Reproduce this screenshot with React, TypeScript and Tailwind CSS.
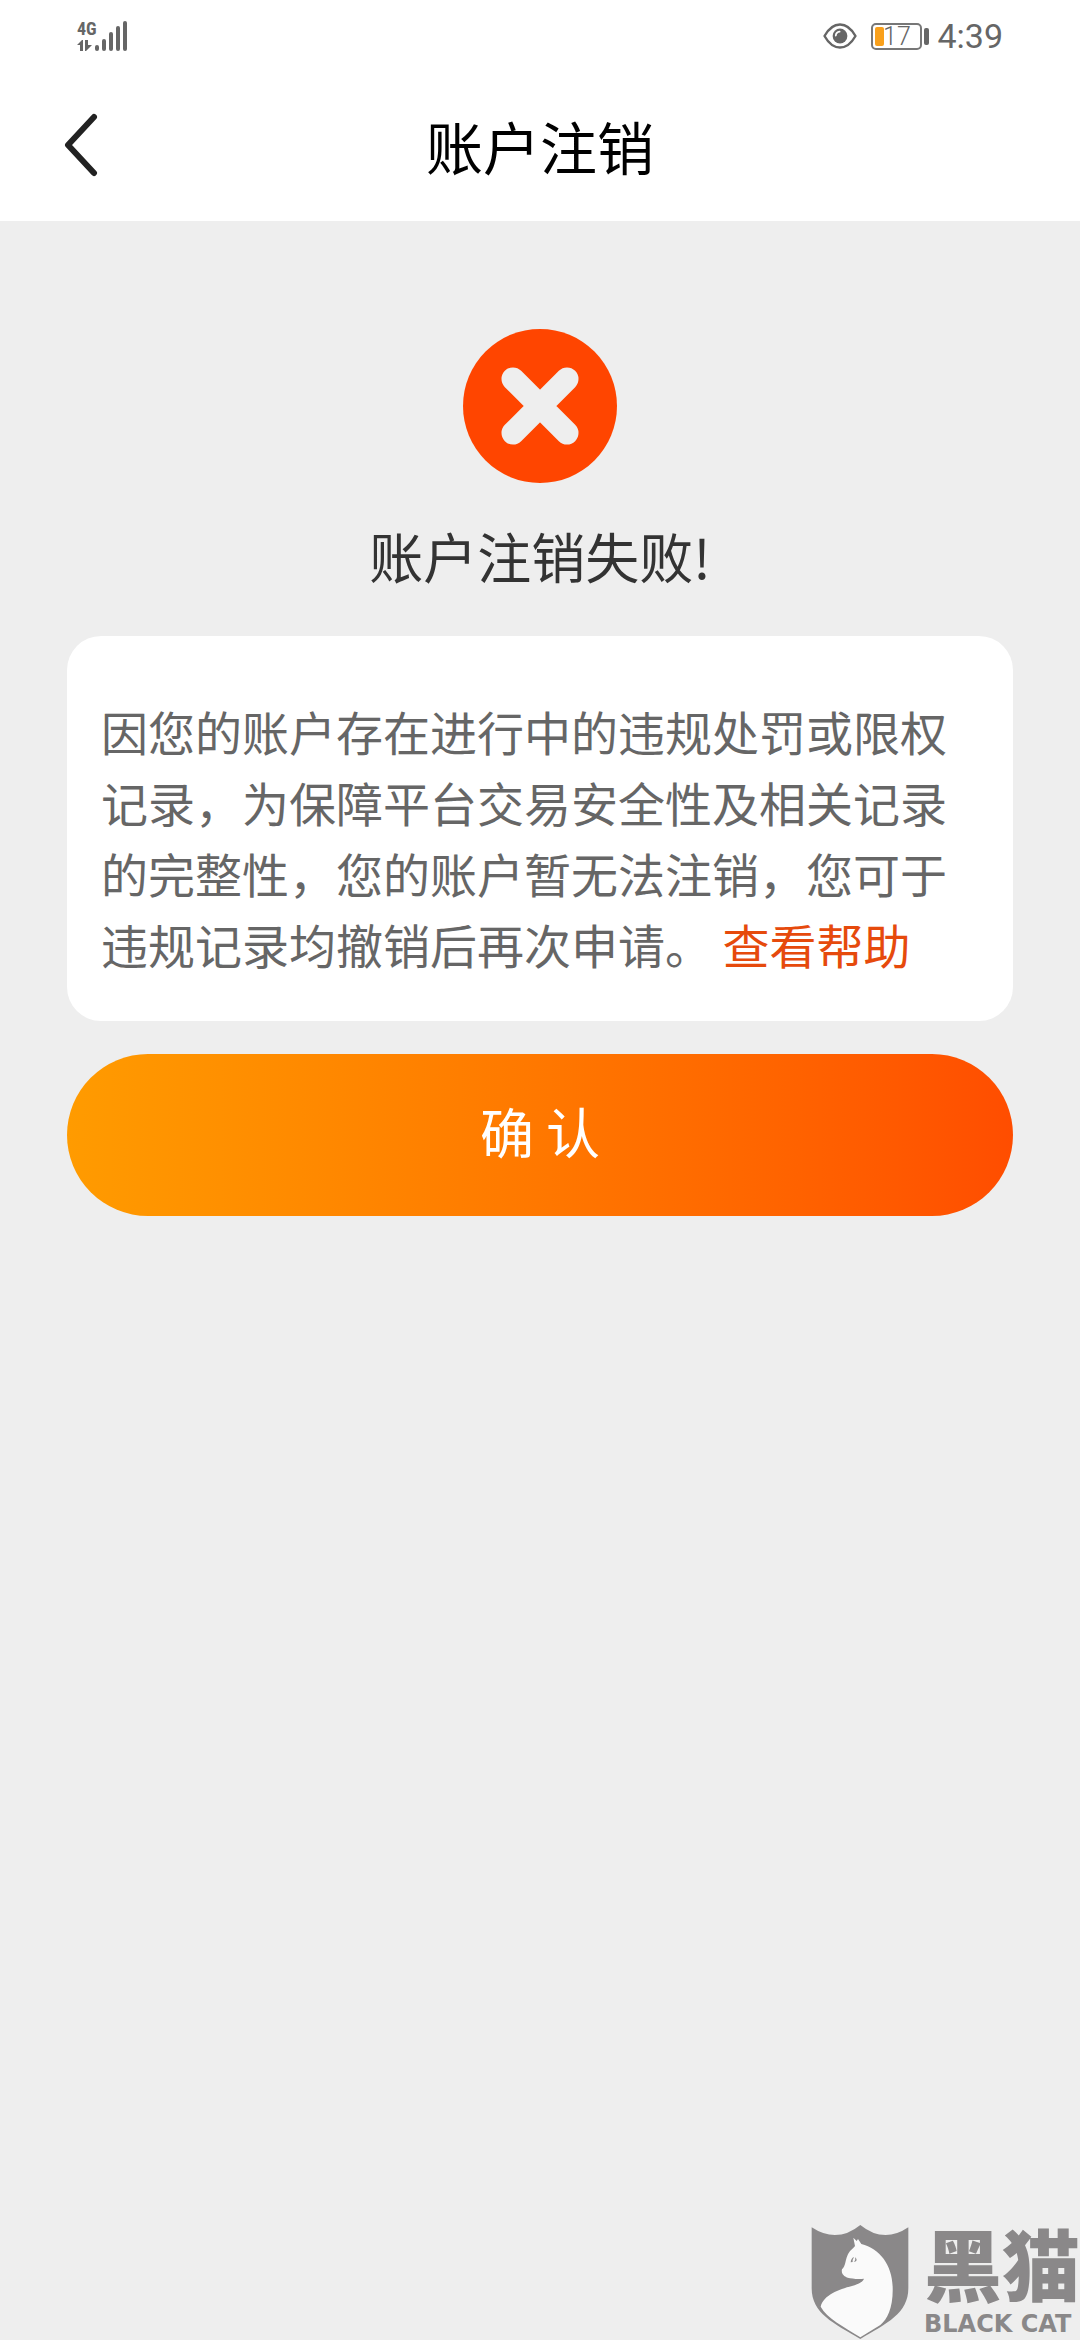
import React from "react";

function SignalIcon() {
  return (
    <svg width="32" height="32" viewBox="95 20 32 32" fill="#666" aria-hidden="true">
      <rect x="95" y="45" width="4" height="6" rx="2" />
      <rect x="102" y="39" width="4" height="12" rx="2" />
      <rect x="109" y="32" width="4" height="19" rx="2" />
      <rect x="116" y="26" width="4" height="25" rx="2" />
      <rect x="123" y="21" width="4" height="30" rx="2" />
    </svg>
  );
}

function DataArrows() {
  return (
    <svg width="16" height="12" viewBox="0 0 16 12" fill="#666" aria-hidden="true">
      <path d="M0 5 L5 0 H6 V11 H3 V5 Z" />
      <path d="M8 0 H11 V5 H15 L9 11 H8 Z" />
    </svg>
  );
}

function EyeIcon() {
  return (
    <svg width="34" height="26" viewBox="0 0 34 26" fill="none" aria-hidden="true">
      <path
        d="M1.5 13 C6 5 11 1.5 17 1.5 S28 5 32.5 13 C28 21 23 24.5 17 24.5 S6 21 1.5 13 Z"
        stroke="#666"
        strokeWidth="2.4"
        strokeLinejoin="round"
      />
      <circle cx="17" cy="13" r="7.4" fill="#666" />
      <path d="M12.8 12.5 A4.3 4.3 0 0 1 16.6 8.6" stroke="#fff" strokeWidth="1.8" strokeLinecap="round" />
    </svg>
  );
}

function Battery({ level }: { level: number }) {
  return (
    <div className="flex items-center gap-[2px]">
      <div className="relative flex h-[27px] w-[51px] items-center justify-center rounded-[5px] border-2 border-[#777]">
        <div className="absolute inset-y-[2px] left-[2px] w-[9px] rounded-[2px] bg-[#f9a01b]" />
        <span className="relative text-[25px] leading-none font-light">{level}</span>
      </div>
      <div className="h-[17px] w-[5px] rounded-[2px] bg-[#666]" />
    </div>
  );
}

function StatusBar() {
  return (
    <div className="flex h-[72px] items-center justify-between pr-[77px] pl-[77px] font-[Roboto,sans-serif] text-[#666]">
      <div className="flex items-end gap-[2px]">
        <div className="flex flex-col gap-[3px]">
          <span className="h-[17px] w-[16px] font-['Liberation_Sans_Narrow','Roboto_Condensed',Roboto,sans-serif] text-[18px] leading-[17px] font-bold">
            4G
          </span>
          <DataArrows />
        </div>
        <SignalIcon />
      </div>
      <div className="flex items-center">
        <EyeIcon />
        <div className="mr-[8px] ml-[14px]">
          <Battery level={17} />
        </div>
        <span className="text-[34px] leading-none">4:39</span>
      </div>
    </div>
  );
}

function FailIcon() {
  return (
    <svg width="154" height="154" viewBox="0 0 154 154" aria-hidden="true">
      <circle cx="77" cy="77" r="77" fill="#ff4500" />
      <path d="M50 50 L104 104 M104 50 L50 104" stroke="#eee" strokeWidth="23" strokeLinecap="round" />
    </svg>
  );
}

function Watermark() {
  return (
    <div className="pointer-events-none absolute right-0 bottom-0 flex items-end gap-[15px] text-[#8a8889]">
      <svg width="98" height="116" viewBox="62 42 294 348" aria-hidden="true">
        <path
          d="M64 52 Q140 102 210 45 Q280 102 354 52 V235 C354 310 290 340 210 387 C130 340 64 310 64 235 Z"
          fill="#8a8889"
        />
        <path
          d="M189 83 L199 93 L203 87 L213 102 C268 115 305 165 307 230 C309 290 292 328 270 345 L210 382 C160 350 110 325 91 290 C100 255 145 238 185 228 C208 221 218 214 221 206 C200 209 184 205 172 203 C160 199 152 190 155 178 C166 168 165 150 171 137 C177 122 188 116 194 108 Z"
          fill="#fafafa"
        />
        <path d="M181 157 Q182 145 191 141 Q186 149 187 156 Z M190 156 Q197 151 194 142 Q202 149 197 154 Z" fill="#8a8889" />
      </svg>
      <div className="flex flex-col gap-[8px] pb-[4px]">
        <span className="text-[78px] leading-[84px] font-black">黑猫</span>
        <span className="font-['DejaVu_Sans',sans-serif] text-[24px] leading-[24px] font-bold whitespace-nowrap">
          BLACK CAT
        </span>
      </div>
    </div>
  );
}

function App() {
  return (
    <div className="relative flex min-h-screen flex-col bg-[#eee] font-['Noto_Sans_CJK_SC',sans-serif]">
      <header className="bg-white pb-[3px]">
        <StatusBar />
        <div className="grid h-[146px] grid-cols-[1fr_auto_1fr] items-center px-[63px]">
          <button type="button" aria-label="返回" className="justify-self-start">
            <svg width="36" height="64" viewBox="0 0 36 64" fill="none">
              <path d="M31 4 L5 32 L31 60" stroke="#222" strokeWidth="6" strokeLinecap="round" strokeLinejoin="round" />
            </svg>
          </button>
          <h1 className="text-[57px] leading-none text-black">账户注销</h1>
        </div>
      </header>

      <main className="flex flex-col px-[67px] pt-[108px]">
        <div className="flex flex-col items-center gap-[35px]">
          <FailIcon />
          <h2 className="text-[54px] leading-[76px] text-[#333]">账户注销失败!</h2>
        </div>

        <section className="mt-[42px] rounded-[34px] bg-white px-[34px] pt-[59px] pb-[42px]">
          <p className="text-[47px] leading-[71px] text-[#666]">
            因您的账户存在进行中的违规处罚或限权记录，为保障平台交易安全性及相关记录的完整性，您的账户暂无法注销，您可于违规记录均撤销后再次申请。{" "}
            <a href="#help" className="text-[#e64a0c]">查看帮助</a>
          </p>
        </section>

        <button
          type="button"
          className="mt-[33px] h-[162px] rounded-full bg-linear-to-r from-[#ff9b00] to-[#ff4d00] pb-[8px] text-[54px] leading-none text-white"
        >
          确 认
        </button>
      </main>

      <Watermark />
    </div>
  );
}

export default App;
